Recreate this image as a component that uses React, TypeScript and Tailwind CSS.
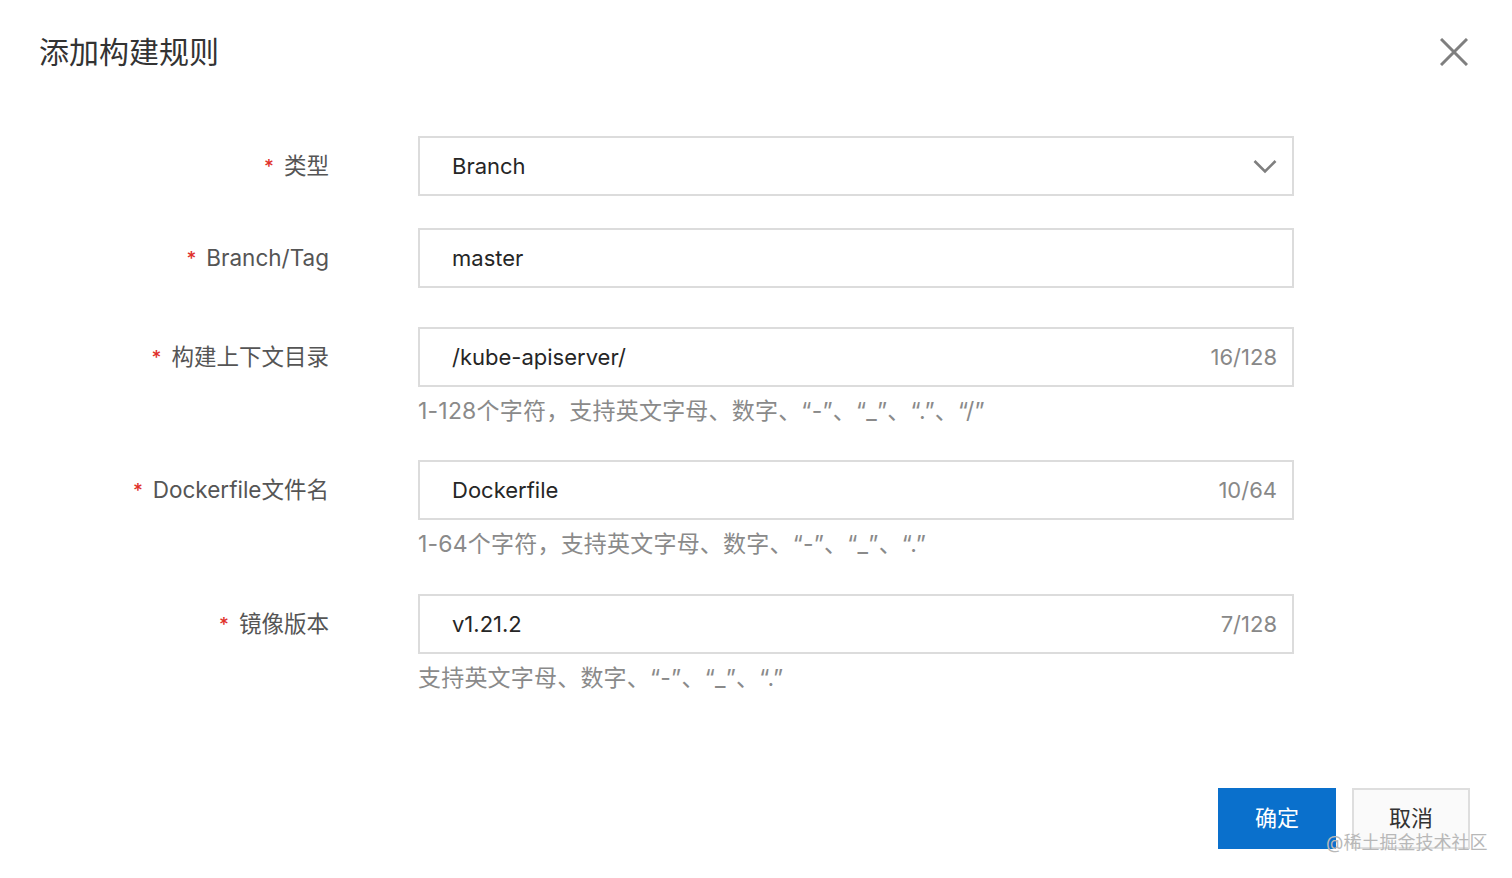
import React from "react";

const font = { fontFamily: 'Inter, "Noto Sans CJK SC", sans-serif' };

function Label({ text }: { text: string }) {
  return (
    <div className="w-[329px] shrink-0 flex items-center justify-end h-[60px] text-[22.5px] text-[#555]">
      <span className="text-[#e0302a] text-[19px] font-medium mr-[10px] leading-none">*</span>
      <span>{text}</span>
    </div>
  );
}

function Field({
  label,
  value,
  count,
  helper,
  select,
  className,
}: {
  label: string;
  value: string;
  count?: string;
  helper?: string;
  select?: boolean;
  className?: string;
}) {
  return (
    <div className={"flex " + (className ?? "")}>
      <Label text={label} />
      <div className="ml-[89px] w-[876px]">
        <div className="h-[60px] border-2 border-[#dcdcdc] flex items-center pl-[32px] pr-[15px] text-[22px] text-[#262626]">
          <span className="flex-1">{value}</span>
          {count && <span className="text-[#888]">{count}</span>}
          {select && (
            <svg width="24" height="15" viewBox="0 0 24 15">
              <polyline points="1.5,2 12,12.5 22.5,2" fill="none" stroke="#7f7f7f" strokeWidth="2.6" />
            </svg>
          )}
        </div>
        {helper && (
          <div className="mt-[8px] leading-[32px] text-[23px] text-[#8a8a8a] tracking-[0.2px]">{helper}</div>
        )}
      </div>
    </div>
  );
}

export default function App() {
  return (
    <div className="w-[1512px] h-[878px] bg-white relative overflow-hidden" style={font}>
      <div className="flex items-center justify-between pl-[39px] pr-[44px] pt-[33px] h-[70px]">
        <h1 className="text-[30px] text-[#333] leading-none">添加构建规则</h1>
        <svg width="28" height="28" viewBox="0 0 28 28">
          <path d="M1 1 L27 27 M27 1 L1 27" stroke="#7f7f7f" strokeWidth="3" />
        </svg>
      </div>

      <div className="mt-[66px] flex flex-col">
        <Field label="类型" value="Branch" select className="mb-[32px]" />
        <Field label="Branch/Tag" value="master" className="mb-[39px]" />
        <Field
          label="构建上下文目录"
          value="/kube-apiserver/"
          count="16/128"
          helper="1-128个字符，支持英文字母、数字、“-”、“_”、“.”、“/”"
          className="mb-[33px]"
        />
        <Field
          label="Dockerfile文件名"
          value="Dockerfile"
          count="10/64"
          helper="1-64个字符，支持英文字母、数字、“-”、“_”、“.”"
          className="mb-[34px]"
        />
        <Field
          label="镜像版本"
          value="v1.21.2"
          count="7/128"
          helper="支持英文字母、数字、“-”、“_”、“.”"
        />
      </div>

      <div className="flex justify-end gap-[16px] pr-[42px] mt-[94px]">
        <button className="w-[118px] h-[61px] bg-[#0a70cc] text-white text-[22px]">确定</button>
        <button className="w-[118px] h-[61px] bg-[#fafafa] border-2 border-[#dedede] text-[#333] text-[22px]">
          取消
        </button>
      </div>

      <div className="absolute left-[1326px] top-[834px] text-[18px] text-[#b8b8b8] leading-none">
        @稀土掘金技术社区
      </div>
    </div>
  );
}
